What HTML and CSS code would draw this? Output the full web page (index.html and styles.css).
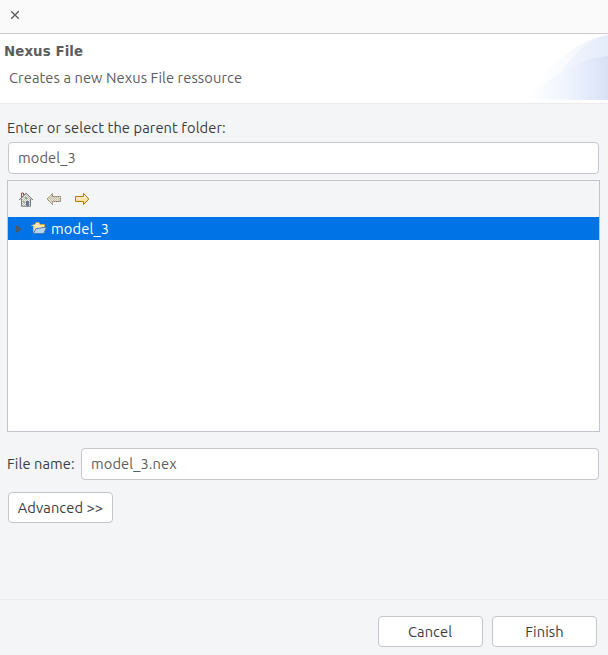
FILE: index.html
```html
<!DOCTYPE html>
<html lang="en">
<head>
<meta charset="utf-8">
<title>Nexus File</title>
<link rel="stylesheet" href="styles.css">
</head>
<body>
<div class="dialog">
  <div class="titlebar">
    <svg class="close" width="10" height="10" viewBox="0 0 10 10"><path d="M1.2 1.200l7.600 7.600M8.800 1.200L1.200 8.800" fill="none" stroke="#5b5c5e" stroke-width="1.3"/></svg>
  </div>
  <header class="banner">
    <div class="banner-text">
      <h1>Nexus File</h1>
      <p>Creates a new Nexus File ressource</p>
    </div>
    <svg class="banner-art" width="75" height="66" viewBox="0 0 75 66">
      <defs>
        <linearGradient id="outer"><stop offset="0" stop-color="#fff"/><stop offset=".5" stop-color="#f8fafe"/><stop offset="1" stop-color="#e9effb"/></linearGradient>
        <linearGradient id="mid"><stop offset="0" stop-color="#f3f6fd"/><stop offset="1" stop-color="#e4ebfa"/></linearGradient>
        <linearGradient id="inner"><stop offset="0" stop-color="#fff"/><stop offset=".45" stop-color="#f0f5fd"/><stop offset="1" stop-color="#d9e1f6"/></linearGradient>
      </defs>
      <path d="M-4 66C13 33 42 6 75 1V66Z" fill="url(#outer)"/>
      <path d="M28 38C41 20 56 5 75 1V38Z" fill="url(#mid)"/>
      <path d="M-4 66C13 46 44 25 75 22V66Z" fill="url(#inner)"/>
    </svg>
  </header>
  <main class="content">
    <label class="folder-label" for="folder">Enter or select the parent folder:</label>
    <input class="field folder" id="folder" value="model_3">
    <section class="tree">
      <div class="toolbar">
        <svg width="16" height="16" viewBox="0 0 16 16">
          <defs>
            <pattern id="dither" width="2" height="2" patternUnits="userSpaceOnUse"><path d="M0 0h1v1H0zM1 1h1v1H1z" fill="#777a80"/></pattern>
          </defs>
          <path d="M3.500 8.500v7h9v-7L8 2.500z" fill="#f0eee8"/>
          <path d="M3 8v7h10V8L8 2z" fill="url(#dither)" opacity=".45" shape-rendering="crispEdges"/>
          <path d="M1.200 9L8 2.200 14.800 9" fill="none" stroke="#66625c"/>
          <path d="M3.500 8v7.300h9V8" fill="none" stroke="#6a6d70" opacity=".85"/>
          <path d="M3.500 6V2h2v2" fill="none" stroke="#8a5550"/>
          <path d="M7 6h2v2H7z" fill="#8fa873"/>
          <path d="M8 10h3v5H8z" fill="#66789a"/>
          <path d="M5 10h2v2H5z" fill="#a8b48c"/>
        </svg>
        <svg width="16" height="16" viewBox="0 0 16 16">
          <path d="M1.200 8L6.500 2.500v3h8v5h-8v3z" fill="#e8e1cc" stroke="#827354" stroke-dasharray="1.300 .5"/>
          <path d="M2 8l4-4v2h8v4H6v2z" fill="url(#dither)" opacity=".35" shape-rendering="crispEdges"/>
        </svg>
        <svg width="16" height="16" viewBox="0 0 16 16">
          <defs><linearGradient id="gold" x2="0" y2="1"><stop stop-color="#fffce6"/><stop offset="1" stop-color="#ffd46a"/></linearGradient></defs>
          <path d="M14.800 8L9.500 2.300v3.200h-8v5h8v3.200z" fill="url(#gold)" stroke="#b67a10"/>
        </svg>
      </div>
      <div class="tree-row">
        <svg width="6" height="8" viewBox="0 0 6 8"><path d="M0 0l6 4-6 4z" fill="#4c5966"/></svg>
        <svg class="folder-icon" width="16" height="14" viewBox="0 0 16 14">
          <path d="M2.500 11.500V3.500H4l1-2h3l1 2h4.500v8z" fill="#fbe8ad" stroke="#d0a45a"/>
          <path d="M.5 4.500H3v7" fill="none" stroke="#f1cf80"/>
          <path d="M2.500 12.500L5 7.500c3 0 5-.5 6-1h4.500l-3 6z" fill="#b4d6f6" stroke="#477dbd"/>
        </svg>
        <span class="tree-name">model_3</span>
      </div>
    </section>
    <div class="name-row">
      <label class="name-label" for="name">File name:</label>
      <input class="field name" id="name" value="model_3.nex">
    </div>
    <button class="btn advanced">Advanced &gt;&gt;</button>
  </main>
  <footer class="actions">
    <button class="btn cancel">Cancel</button>
    <button class="btn finish">Finish</button>
  </footer>
</div>
</body>
</html>
```
FILE: styles.css
```css
* { box-sizing: border-box; }
body {
  margin: 0;
  background: #f4f5f7;
  color: #3b3c3e;
  font: 14.667px/20px Ubuntu, "Noto Sans", sans-serif;
  letter-spacing: .09px;
}
.dialog { width: 608px; height: 655px; display: flex; flex-direction: column; overflow: hidden; }
.titlebar { height: 34px; flex: none; padding: 10px; background: #fafafa; border-bottom: 1px solid #cdcccf; }
.close { display: block; }
.banner { height: 70px; flex: none; display: flex; justify-content: space-between; background: #fff; color: #5c5d5f; border-bottom: 1px solid #ebebed; }
.banner-text { padding: 8px 0 0 4px; }
h1 { margin: 0; font: bold 13.33px/20px "DejaVu Sans", sans-serif; letter-spacing: .1px; }
p { margin: 6px 0 0 5px; white-space: nowrap; }
.banner-art { display: block; }
.content { flex: 1; padding: 14px 8px 0; display: flex; flex-direction: column; }
.folder-label { height: 24px; margin-left: -1px; }
.field {
  height: 32px;
  padding: 0 9px 2px;
  border: 1px solid #c4c6cb;
  border-radius: 4px;
  background: #fff;
  color: #5c5d5f;
  font: inherit;
  letter-spacing: inherit;
  outline: none;
}
.folder { width: 591px; }
.tree { width: 593px; height: 252px; margin: 6px 0 0 -1px; border: 1px solid #c1c5cc; background: #fff; flex: none; }
.toolbar { height: 36px; padding: 10px; display: flex; gap: 12px; background: #f4f5f7; }
.tree-row { height: 23px; padding-left: 8px; display: flex; align-items: center; background: #0073e6; color: #fff; }
.tree-name { letter-spacing: .15px; }
.folder-icon { margin: 0 4px 2px 9px; }
.name-row { margin: 16px 0 0 -1px; display: flex; align-items: center; }
.name-label { width: 74px; white-space: nowrap; }
.name { width: 518px; }
.btn { height: 31px; width: 105px; padding: 0; border: 1px solid #c4c6cc; border-radius: 4px; background: #fff; color: inherit; font: inherit; letter-spacing: inherit; }
.cancel { padding-right: 1px; }
.advanced { margin-top: 12px; }
.actions { height: 56px; flex: none; padding: 16px 11px 0 0; display: flex; justify-content: flex-end; gap: 9px; border-top: 1px solid #ebecee; }
```
